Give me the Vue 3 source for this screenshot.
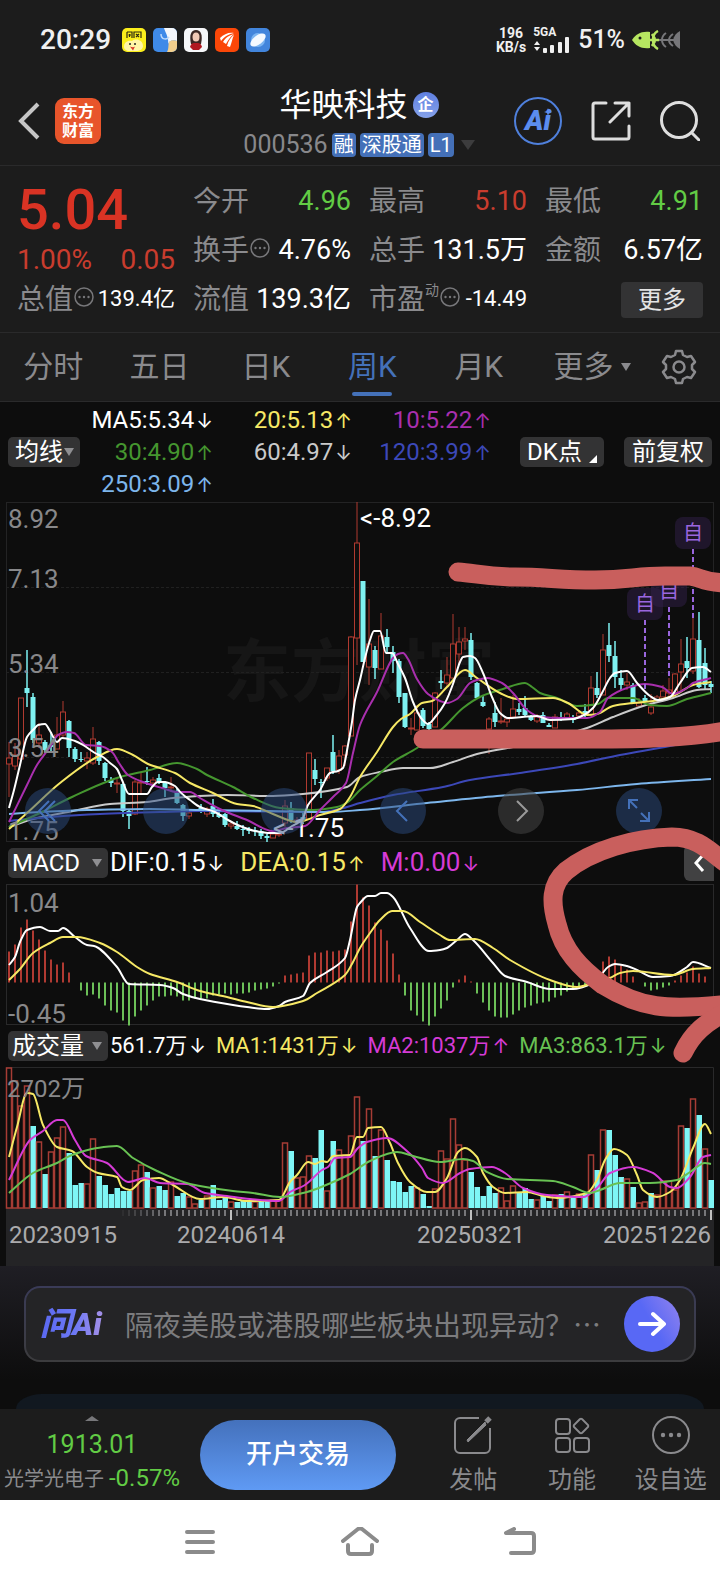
<template>
  <div class="app">
    <header class="status-bar">
      <div class="status-left">
        <span class="clock">20:29</span>
        <svg class="app-icon" viewBox="0 0 24 24" aria-hidden="true">
          <rect width="24" height="24" rx="5" fill="#fbee1c" />
          <path d="M5 4v6M5 4h5v6M7.500 6v3M6.500 7h2.500M12 10V4h7v6M14 6l3 3M17 6l-3 3" fill="none" stroke="#2c2a10" stroke-width="1.200" />
          <path d="M2 19c0-5 4-7 8-6 4-3 11-1 11 5 0 3-3 5-7 5H8c-4 0-6-2-6-4z" fill="#fff6a8" />
          <circle cx="8" cy="16" r="1" fill="#222" /><circle cx="13" cy="16" r="1" fill="#222" />
          <path d="M8 18.500c2 1 4 1 5 0l-2 4z" fill="#d8382a" />
        </svg>
        <svg class="app-icon" viewBox="0 0 24 24" aria-hidden="true">
          <rect width="24" height="24" rx="5" fill="#3f8ae8" />
          <path d="M11 0h8a5 5 0 0 1 5 5v8c-4-2-8 0-9 3 1-6-2-10-4-16z" fill="#f5f7fa" />
          <path d="M14 24c2-3 1-7 2-10 2-2 5-2 8-1v6a5 5 0 0 1-5 5z" fill="#f2cf8d" />
          <path d="M8 6c0 6 6 6 8 3" fill="none" stroke="#bcd9fb" stroke-width="1.500" />
        </svg>
        <svg class="app-icon" viewBox="0 0 24 24" aria-hidden="true">
          <rect width="24" height="24" rx="5" fill="#f6f7f9" />
          <path d="M7 16c-2-9 0-14 5-14s7 5 5 14z" fill="#3a2723" />
          <ellipse cx="12" cy="9" rx="3.500" ry="4.500" fill="#f1c9b5" />
          <path d="M6 19c1-4 3-4 6-4s5 0 6 4l-3 3H9z" fill="#b01820" />
        </svg>
        <svg class="app-icon" viewBox="0 0 24 24" aria-hidden="true">
          <rect width="24" height="24" rx="5" fill="#fb4708" />
          <path d="M5 10c4-4 9-6 14-5-5 1-9 3-13 8zM8 14c3-5 7-7 11-8-4 3-6 6-8 10zM12 18c1-5 4-9 7-11-2 4-2 7-4 12z" fill="#fff" />
        </svg>
        <svg class="app-icon" viewBox="0 0 24 24" aria-hidden="true">
          <rect width="24" height="24" rx="5" fill="#4285dc" />
          <circle cx="12" cy="12" r="7" fill="#7ab4f2" />
          <ellipse cx="12" cy="12" rx="9" ry="4.500" fill="#f4f9ff" transform="rotate(-38 12 12)" />
        </svg>
      </div>
      <div class="status-right">
        <span class="net-speed">196<br />KB/s</span>
        <span class="signal">
          <span class="signal-type">5GA</span>
          <svg width="38" height="17" viewBox="0 0 38 17" fill="#f0f0f0" aria-hidden="true">
            <path d="M1 8l3-4 3 4zM1 10l3 4 3-4z" />
            <rect x="10" y="11" width="4" height="5" rx="1" /><rect x="17" y="8" width="4" height="8" rx="1" />
            <rect x="25" y="5" width="4" height="11" rx="1" /><rect x="32" y="0" width="4" height="16" rx="1" />
          </svg>
        </span>
        <span class="battery">51%</span>
        <svg width="48" height="20" viewBox="0 0 48 20" aria-hidden="true">
          <path d="M0 10C4 4 9 1 18 2v16C9 19 4 16 0 10z" fill="#b6e661" />
          <circle cx="8" cy="8" r="1.500" fill="#1c1c1c" />
          <path d="M18 10h9M26 1c-4 2-5 5-5 9s1 7 5 9M20 4l3 5M20 16l3-5" fill="none" stroke="#b6e661" stroke-width="2.500" />
          <path d="M27 10h16M34 3c-3 2-4 4-4 7s1 5 4 7M41 4c-3 2-4 4-4 6s1 4 4 6" fill="none" stroke="#77777a" stroke-width="2" />
          <path d="M48 1c-4 2-6 5-7 9 1 4 3 7 7 9z" fill="#77777a" />
        </svg>
      </div>
    </header>

    <nav class="title-bar">
      <div class="title-left">
        <button class="plain" aria-label="返回">
          <svg width="22" height="38" viewBox="0 0 22 38" fill="none" stroke="#c6c6c6" stroke-width="4"><path d="M20 2L3 19l17 17" /></svg>
        </button>
        <a href="#" class="brand"><span>东方</span><span>财富</span></a>
      </div>
      <div class="title-center">
        <h1>华映科技<span class="corp">企</span></h1>
        <div class="code-row">
          <span class="code">000536</span>
          <span v-for="t in ['融', '深股通', 'L1']" :key="t" class="tag">{{ t }}</span>
          <svg width="14" height="10" viewBox="0 0 14 10" fill="#3c3c3d" aria-hidden="true"><path d="M0 0h14L7 10z" /></svg>
        </div>
      </div>
      <div class="title-right">
        <button class="ai-btn" aria-label="Ai">
          Ai
          <svg class="sparkle" width="8" height="8" viewBox="0 0 8 8" fill="#5b8def"><path d="M4 0l1 3 3 1-3 1-1 3-1-3-3-1 3-1z" /></svg>
        </button>
        <button class="plain" aria-label="分享">
          <svg width="40" height="40" viewBox="0 0 40 40" fill="none" stroke="#dedede" stroke-width="3" stroke-linecap="round" stroke-linejoin="round">
            <path d="M15 2H4a2 2 0 0 0-2 2v32a2 2 0 0 0 2 2h32a2 2 0 0 0 2-2V25M24 2h14v13M38 2L19 21" />
          </svg>
        </button>
        <button class="plain" aria-label="搜索">
          <svg width="40" height="40" viewBox="0 0 40 40" fill="none" stroke="#dedede" stroke-width="3" stroke-linecap="round"><circle cx="19" cy="19" r="17.500" /><path d="M32 32l7 7" /></svg>
        </button>
      </div>
    </nav>

    <section class="quote">
      <div class="price-box">
        <div class="price">5.04</div>
        <div class="change"><span>1.00%</span><span>0.05</span></div>
      </div>
      <div v-for="q in quotes" :key="q.label" class="cell">
        <span class="label">{{ q.label }}<sup v-if="q.sup">{{ q.sup }}</sup></span>
        <svg v-if="q.tip" class="tip" viewBox="0 0 20 20" fill="#77777a" aria-hidden="true">
          <circle cx="10" cy="10" r="9" fill="none" stroke="#77777a" stroke-width="1.500" />
          <circle cx="5.500" cy="10" r="1.200" /><circle cx="10" cy="10" r="1.200" /><circle cx="14.500" cy="10" r="1.200" />
        </svg>
        <span class="value" :class="[q.tone, { small: q.small }]">{{ q.value }}</span>
      </div>
      <div class="cell more-cell"><button class="more">更多</button></div>
    </section>

    <nav class="tabs">
      <button v-for="t in tabs" :key="t" class="tab" :class="{ active: t === tab }" @click="tab = t">{{ t }}</button>
      <button class="tab">更多<svg width="10" height="8" viewBox="0 0 10 8" fill="#8a8a8d"><path d="M0 0h10L5 8z" /></svg></button>
      <button class="tab gear" aria-label="设置">
        <svg width="36" height="36" viewBox="0 0 36 36" fill="none" stroke="#8a8a8d" stroke-width="2.500" stroke-linejoin="round">
          <path d="M15 2h6l1 4 4 2 4-1 4 6-3 3v4l3 3-4 6-4-1-4 2-1 4h-6l-1-4-4-2-4 1-4-6 3-3v-4l-3-3 4-6 4 1 4-2z" />
          <circle cx="18" cy="18" r="5.500" />
        </svg>
      </button>
    </nav>

    <section class="ma-panel">
      <div class="picker">
        <select aria-label="主图指标"><option>均线</option></select>
        <svg class="caret" viewBox="0 0 10 8"><path d="M0 0h10L5 8z" /></svg>
      </div>
      <div class="ma-grid">
        <span v-for="m in maValues" :key="m.text" :class="m.cls">{{ m.text }}<i class="arrow">{{ m.dir }}</i></span>
      </div>
      <div class="ma-buttons">
        <button class="chip dk">DK点<svg width="8" height="8" viewBox="0 0 8 8" fill="#fff"><path d="M8 0v8H0z" /></svg></button>
        <button class="chip">前复权</button>
      </div>
    </section>

    <section class="charts">
      <div class="stage">
        <svg class="plot" viewBox="6 502 708 340">
          <text x="223" y="696" class="watermark">东方财富</text>
          <path d="M6 587.500h708M6 672.500h708M6 757.500h708" stroke="#202020" stroke-dasharray="3 2" />
          <rect x="6.500" y="502.500" width="707" height="339" fill="none" stroke="#232324" />
          <g v-for="(c, i) in candles" :key="i" :class="c[0] ? 'up' : 'down'">
            <path :d="wick(c, i)" />
            <rect :x="cx(i) - 2.5" :y="c[2]" width="5" :height="Math.max(c[3] - c[2], 1)" />
          </g>
          <path v-for="l in priceLines" :key="l.cls" :d="curve(l.points)" class="line" :class="l.cls" />
          <text v-for="a in priceAxis" :key="a.text" x="8" :y="a.y" class="axis">{{ a.text }}</text>
          <text x="360" y="527" class="mark">&lt;-8.92</text>
          <text x="273" y="837" class="mark">&lt;-1.75</text>
          <g v-for="n in notes" :key="n.x">
            <rect :x="n.x - 18" :y="n.y - 16" width="36" height="32" rx="8" class="note-box" />
            <text :x="n.x" :y="n.y + 7" class="note-text">自</text>
            <path :d="`M${n.x} ${n.y + 16}V${n.end}`" stroke="#9a66de" stroke-width="2" stroke-dasharray="5 3" />
          </g>
        </svg>
        <div class="pan-row">
          <button v-for="p in pans" :key="p.name" class="pan" :class="{ grey: p.grey }" :aria-label="p.name">
            <svg viewBox="0 0 46 46" fill="none" stroke-width="2"><path :d="p.d" /></svg>
          </button>
        </div>
      </div>

      <div class="ind-head">
        <div class="picker wide">
          <select aria-label="副图指标"><option>MACD</option></select>
          <svg class="caret" viewBox="0 0 10 8"><path d="M0 0h10L5 8z" /></svg>
        </div>
        <div class="ind-values">
          <span>DIF:0.15<i class="arrow">↓</i></span>
          <span class="yellow">DEA:0.15<i class="arrow">↑</i></span>
          <span class="magenta">M:0.00<i class="arrow">↓</i></span>
        </div>
        <button class="collapse" aria-label="收起">
          <svg width="12" height="20" viewBox="0 0 12 20" fill="none" stroke="#fff" stroke-width="3"><path d="M10 2L3 10l7 8" /></svg>
        </button>
      </div>
      <svg class="plot" viewBox="6 884 708 141">
        <rect x="6.500" y="884.500" width="707" height="140" fill="none" stroke="#29292a" />
        <rect
          v-for="(h, i) in macd" :key="i" :x="cx(i) - 1" width="2"
          :y="h > 0 ? 982.5 - h : 982.5" :height="Math.abs(h)" :fill="h > 0 ? '#b03a32' : '#6cc058'"
        />
        <path :d="curve(dif)" class="line white" />
        <path :d="curve(dea)" class="line yellow" />
        <text x="8" y="912" class="axis">1.04</text>
        <text x="8" y="1023" class="axis">-0.45</text>
      </svg>

      <div class="ind-head">
        <div class="picker wide">
          <select aria-label="量能指标"><option>成交量</option></select>
          <svg class="caret" viewBox="0 0 10 8"><path d="M0 0h10L5 8z" /></svg>
        </div>
        <div class="ind-values vol">
          <span>561.7万<i class="arrow">↓</i></span>
          <span class="yellow">MA1:1431万<i class="arrow">↓</i></span>
          <span class="magenta">MA2:1037万<i class="arrow">↑</i></span>
          <span class="lime">MA3:863.1万<i class="arrow">↓</i></span>
        </div>
      </div>
      <svg class="plot" viewBox="6 1067 708 141">
        <path d="M6 1067.500h707.500V1208" fill="none" stroke="#29292a" />
        <rect
          v-for="(v, i) in volumes" :key="i" :class="v > 0 ? 'vol-up' : 'vol-down'"
          :x="cx(i) - 2.5" :y="1208 - Math.abs(v)" :width="v > 0 ? 5 : 5.5" :height="Math.abs(v)"
        />
        <path v-for="l in volLines" :key="l.cls" :d="curve(l.points)" class="line" :class="l.cls" />
        <text x="7" y="1097" class="axis unit">2702万</text>
      </svg>
      <svg class="plot time-axis" viewBox="6 1208 708 58">
        <path v-for="i in 99" :key="i" :d="`M${cx(i + 18)} 1210v6`" stroke="#77777a" stroke-width="2" :opacity="Math.min(i / 8, 1)" />
        <path d="M231 1210v10M471 1210v10M711 1210v10" stroke="#c0c0c0" stroke-width="2" />
        <text x="9" y="1243">20230915</text>
        <text x="231" y="1243" text-anchor="middle">20240614</text>
        <text x="471" y="1243" text-anchor="middle">20250321</text>
        <text x="711" y="1243" text-anchor="end">20251226</text>
      </svg>

      <!-- hand-drawn marks -->
      <svg class="ink" viewBox="0 502 720 764">
        <path d="M458 572C475 573 485 577 515 577S560 580 595 580S635 576 665 576H690C702 577 702 583 730 583" />
        <path d="M423 739H590C640 739 690 738 730 730" />
        <path d="M730 866C712 854 700 837 672 837C634 838 592 850 566 871C550 885 551 903 557 924C563 950 580 968 603 985C640 1008 665 1011 730 1004" />
        <path d="M683 1053C692 1034 705 1022 730 1010" />
      </svg>
    </section>

    <section class="ask">
      <form class="ask-box" @submit.prevent>
        <span class="ask-logo">问<em>Ai</em></span>
        <input v-model="question" type="text" aria-label="问Ai" placeholder="隔夜美股或港股哪些板块出现异动？…" />
        <button type="submit" class="send" aria-label="发送">
          <svg width="28" height="26" viewBox="0 0 28 26" fill="none" stroke="#fff" stroke-width="4" stroke-linecap="round" stroke-linejoin="round"><path d="M2 13h23M15 3l11 10-11 10" /></svg>
        </button>
      </form>
      <div class="next-card"></div>
    </section>

    <footer class="bottom-bar">
      <a href="#" class="index">
        <svg width="14" height="5" viewBox="0 0 14 5" fill="#77777a" aria-hidden="true"><path d="M7 0l7 5H0z" /></svg>
        <span class="index-value">1913.01</span>
        <span class="index-name">光学光电子 <b>-0.57%</b></span>
      </a>
      <button class="trade">开户交易</button>
      <div class="actions">
        <button class="action">
          <svg viewBox="0 0 38 38"><path d="M25 2H6a5 5 0 0 0-5 5v25a5 5 0 0 0 5 5h25a5 5 0 0 0 5-5V12" /><path d="M36 2l-4 4" stroke-width="5" /><path d="M31 6L13 24l1 2 18-17z" fill="#8a8a8d" stroke-width="1" /></svg>
          发帖
        </button>
        <button class="action">
          <svg viewBox="0 0 38 38"><rect x="3" y="3" width="14" height="15" rx="3" /><rect x="3" y="22" width="14" height="14" rx="3" /><rect x="21" y="22" width="15" height="14" rx="3" /><path d="M27 3l-6 6a2 2 0 0 0 0 2l6 6a2 2 0 0 0 2 0l6-6a2 2 0 0 0 0-2l-6-6a2 2 0 0 0-2 0z" /></svg>
          功能
        </button>
        <button class="action">
          <svg viewBox="0 0 38 38"><circle cx="19" cy="19" r="18" /><g fill="#8a8a8d" stroke="none"><circle cx="11" cy="19" r="2.200" /><circle cx="19" cy="19" r="2.200" /><circle cx="27" cy="19" r="2.200" /></g></svg>
          设自选
        </button>
      </div>
    </footer>

    <nav class="system-nav">
      <button class="plain" aria-label="最近任务"><svg width="38" height="30" viewBox="0 0 38 30"><path d="M6 5h26M6 15h26M6 25h26" /></svg></button>
      <button class="plain" aria-label="主屏幕"><svg width="38" height="30" viewBox="0 0 38 30"><path d="M2 14L17 2q2-1 4 0l15 12M7 18v6q0 3 3 3h18q3 0 3-3v-6" /></svg></button>
      <button class="plain" aria-label="返回上一级"><svg width="38" height="30" viewBox="0 0 38 30"><path d="M13 2L5 6h25q3 0 3 3v14q0 3-3 3H10" /></svg></button>
    </nav>
  </div>
</template>

<script setup>
import { ref } from 'vue'

const tabs = ['分时', '五日', '日K', '周K', '月K']
const tab = ref('周K')
const question = ref('')

const quotes = [
  { label: '今开', value: '4.96', tone: 'fall' },
  { label: '最高', value: '5.10', tone: 'rise' },
  { label: '最低', value: '4.91', tone: 'fall' },
  { label: '换手', value: '4.76%', tip: true },
  { label: '总手', value: '131.5万' },
  { label: '金额', value: '6.57亿' },
  { label: '总值', value: '139.4亿', tip: true, small: true },
  { label: '流值', value: '139.3亿' },
  { label: '市盈', sup: '动', value: '-14.49', tip: true, small: true },
]

const maValues = [
  { text: 'MA5:5.34', dir: '↓', cls: 'white' },
  { text: '20:5.13', dir: '↑', cls: 'yellow' },
  { text: '10:5.22', dir: '↑', cls: 'purple' },
  { text: '30:4.90', dir: '↑', cls: 'green' },
  { text: '60:4.97', dir: '↓', cls: 'silver' },
  { text: '120:3.99', dir: '↑', cls: 'indigo' },
  { text: '250:3.09', dir: '↑', cls: 'sky' },
]

const priceAxis = [
  { text: '8.92', y: 528 },
  { text: '7.13', y: 588 },
  { text: '5.34', y: 673 },
  { text: '3.54', y: 757 },
  { text: '1.75', y: 840 },
]

const notes = [
  { x: 645, y: 604, end: 692 },
  { x: 669, y: 591, end: 678 },
  { x: 693, y: 533, end: 620 },
]

const pans = [
  { name: '最早', d: 'M24 13L14 23l10 10M30 13L20 23l10 10' },
  { name: '缩小', d: '' },
  { name: '放大', d: '' },
  { name: '前移', d: 'M27 13L17 23l10 10' },
  { name: '后移', d: 'M19 13l10 10-10 10', grey: true },
  { name: '全屏', d: 'M13 21v-9h9M13 12l8 8M33 24v9h-9M33 33l-8-8' },
]

const cx = (i) => 9 + i * 6
const wick = (c, i) => `M${cx(i)} ${c[1]}V${c[2]}M${cx(i)} ${c[3]}V${c[4]}`

// smooth path through "x,y x,y ..." points, control points never leave the segment's x range
const curve = (points) => {
  const p = points.split(' ').map((s) => s.split(',').map(Number))
  const slope = (i) => {
    if (i === 0 || i === p.length - 1) return 0
    const a = (p[i][1] - p[i - 1][1]) / (p[i][0] - p[i - 1][0])
    const b = (p[i + 1][1] - p[i][1]) / (p[i + 1][0] - p[i][0])
    return a * b <= 0 ? 0 : (2 * a * b) / (a + b)
  }
  let d = `M${p[0]}`
  for (let i = 1; i < p.length; i++) {
    const [x0, y0] = p[i - 1]
    const [x1, y1] = p[i]
    const h = (x1 - x0) / 3
    const s0 = i === 1 ? (y1 - y0) / (x1 - x0) : slope(i - 1)
    const s1 = i === p.length - 1 ? (y1 - y0) / (x1 - x0) : slope(i)
    d += `C${x0 + h},${y0 + s0 * h} ${x1 - h},${y1 - s1 * h} ${x1},${y1}`
  }
  return d
}

// [up, high, body top, body bottom, low]
const candles = [
  [1, 742, 758, 764, 797], [1, 743, 755, 766, 770], [1, 698, 698, 759, 759], [0, 650, 688, 693, 707],
  [0, 693, 697, 740, 743], [1, 723, 735, 743, 748], [0, 740, 742, 750, 753], [0, 732, 745, 747, 752],
  [1, 717, 735, 749, 749], [1, 701, 712, 735, 738], [0, 720, 721, 748, 757], [0, 747, 749, 759, 762],
  [0, 752, 759, 760, 762], [1, 752, 758, 761, 769], [1, 727, 739, 763, 765], [0, 741, 742, 761, 765],
  [0, 762, 763, 778, 781], [0, 777, 780, 783, 787], [1, 779, 783, 784, 793], [0, 783, 784, 811, 817],
  [0, 809, 811, 816, 829], [1, 780, 782, 814, 815], [1, 773, 782, 783, 794], [0, 767, 781, 782, 785],
  [1, 777, 780, 783, 786], [0, 774, 778, 782, 784], [0, 781, 782, 788, 797], [1, 777, 787, 788, 792],
  [0, 788, 791, 803, 804], [0, 804, 805, 816, 821], [1, 810, 813, 816, 819], [0, 809, 810, 811, 812],
  [0, 804, 808, 810, 813], [1, 807, 809, 814, 817], [0, 799, 806, 814, 817], [0, 812, 814, 817, 818],
  [0, 813, 814, 825, 827], [1, 822, 824, 826, 829], [0, 821, 826, 829, 830], [0, 825, 829, 830, 836],
  [0, 827, 829, 831, 834], [0, 827, 830, 831, 836], [0, 829, 831, 836, 839], [0, 834, 836, 838, 842],
  [1, 833, 834, 838, 838], [1, 833, 834, 835, 837], [1, 800, 806, 823, 827], [0, 802, 808, 820, 823],
  [1, 817, 820, 822, 825], [0, 812, 817, 820, 824], [1, 753, 753, 819, 819], [0, 759, 770, 779, 785],
  [0, 779, 782, 783, 798], [1, 768, 768, 778, 781], [0, 735, 752, 771, 774], [1, 750, 756, 770, 774],
  [1, 745, 746, 755, 766], [1, 636, 637, 736, 736], [1, 502, 543, 638, 665], [0, 581, 581, 662, 662],
  [1, 599, 644, 667, 685], [0, 646, 650, 668, 679], [1, 613, 636, 669, 669], [0, 629, 637, 647, 652],
  [0, 646, 652, 661, 673], [0, 659, 661, 697, 703], [0, 693, 693, 727, 728], [1, 718, 728, 729, 735],
  [1, 705, 713, 730, 730], [0, 708, 710, 726, 728], [0, 722, 724, 729, 730], [1, 692, 693, 727, 727],
  [0, 670, 681, 683, 689], [1, 657, 675, 683, 687], [1, 614, 644, 678, 678], [1, 627, 642, 654, 664],
  [1, 627, 639, 641, 650], [0, 633, 640, 677, 680], [0, 682, 683, 698, 698], [0, 696, 702, 706, 707],
  [1, 717, 719, 729, 754], [0, 702, 713, 722, 727], [1, 698, 721, 722, 724], [1, 717, 719, 722, 727],
  [1, 695, 709, 717, 717], [0, 703, 709, 712, 715], [0, 696, 708, 715, 717], [0, 715, 716, 720, 721],
  [1, 714, 717, 721, 723], [0, 712, 715, 723, 723], [0, 723, 725, 727, 727], [1, 714, 717, 728, 728],
  [0, 712, 717, 720, 721], [1, 712, 714, 718, 720], [0, 715, 717, 720, 723], [1, 710, 713, 716, 717],
  [0, 704, 711, 713, 717], [1, 676, 688, 715, 715], [0, 672, 688, 695, 698], [1, 634, 650, 695, 695],
  [0, 623, 645, 656, 662], [0, 641, 656, 677, 688], [0, 670, 678, 685, 690], [1, 673, 682, 685, 690],
  [0, 683, 685, 703, 704], [1, 698, 703, 706, 708], [0, 695, 698, 701, 702], [1, 694, 707, 713, 715],
  [1, 695, 697, 700, 702], [1, 685, 691, 697, 697], [1, 678, 690, 693, 697], [1, 673, 674, 693, 697],
  [1, 639, 664, 672, 690], [0, 637, 661, 668, 678], [1, 618, 639, 671, 674], [0, 612, 640, 687, 688],
  [0, 648, 663, 685, 690], [0, 681, 684, 687, 693],
]

const priceLines = [
  { cls: 'silver', points: '9,827 33,819 73,811 110,804 147,802 173,798 227,795 273,796 303,794 347,787 360,777 380,772 403,768 430,768 453,762 477,754 513,747 550,739 587,728 613,717 643,706 673,698 697,690 711,689' },
  { cls: 'indigo', points: '9,821 50,817 100,814 160,812 200,811 320,812 343,808 360,803 393,795 443,787 470,780 520,773 577,764 620,755 670,746 711,737' },
  { cls: 'sky', points: '9,814 40,812 87,810 150,809 200,810 270,811 330,812 360,810 427,803 497,796 577,790 637,784 711,779' },
  { cls: 'green', points: '9,827 40,813 72,797 117,778 150,770 177,763 197,769 207,775 233,787 253,798 280,808 313,810 337,807 348,802 360,790 377,776 393,762 417,748 443,728 463,708 482,696 503,689 525,683 532,687 540,693 557,698 577,706 598,704 608,698 633,698 650,705 667,706 687,699 711,693' },
  { cls: 'yellow', points: '9,829 27,813 60,783 97,757 117,749 133,755 148,764 175,773 190,783 213,793 237,804 253,806 273,814 297,822 320,815 340,809 350,797 360,777 377,752 393,727 401,719 410,714 422,703 432,701 447,687 465,670 477,678 500,693 517,699 553,698 568,703 587,715 597,714 613,706 633,703 653,701 673,696 693,685 711,682' },
  { cls: 'purple', points: '9,822 27,785 37,765 50,747 58,735 67,732 74,733 86,745 100,746 112,752 119,763 128,775 143,782 162,788 177,792 190,792 200,798 222,810 247,820 273,831 287,828 305,826 320,810 333,797 346,783 353,753 360,725 377,692 393,658 398,654 403,653 408,659 417,679 428,694 440,701 447,703 457,699 470,683 477,680 487,678 502,683 513,693 527,710 540,717 560,718 587,718 600,712 608,698 627,688 645,684 662,687 673,694 687,688 693,683 711,678' },
  { cls: 'white', points: '9,808 14,790 20,765 27,737 34,729 38,725 45,724 50,731 57,742 62,738 75,741 83,745 95,753 103,757 110,763 117,769 122,780 129,794 147,794 152,787 158,782 164,782 175,786 181,793 190,800 200,807 215,812 228,820 240,826 255,831 270,833 280,833 292,826 302,820 308,805 320,790 330,773 338,771 343,768 348,745 352,722 355,700 360,680 365,658 370,640 374,631 380,631 386,653 392,653 398,664 405,678 413,702 421,718 428,724 436,716 445,703 453,684 460,662 463,657 470,656 475,658 483,673 492,697 500,713 508,718 522,717 537,716 550,720 573,719 584,715 593,708 602,693 610,678 615,673 627,671 637,683 650,696 658,700 670,697 680,683 692,668 703,667 711,672' },
]

// histogram heights in px, negative below zero
const macd = [
  31, 38, 55, 63, 52, 43, 32, 23, 18, 20, 10, 0, -8, -13, -12, -16, -23, -28, -30, -38,
  -43, -34, -28, -23, -18, -14, -14, -13, -14, -18, -18, -16, -16, -16, -13, -12, -11, -12, -11, -11,
  -10, -8, -7, -6, -4, -1, 7, 8, 9, 10, 27, 30, 30, 32, 31, 32, 33, 61, 98, 85,
  77, 60, 53, 42, 29, 8, -13, -28, -33, -39, -43, -34, -26, -18, -5, 3, 7, 1, -11, -20,
  -28, -34, -35, -35, -32, -28, -25, -23, -21, -20, -19, -15, -13, -9, -7, -4, -3, 2, 10, 21,
  26, 23, 17, 13, 6, 0, -4, -8, -7, -5, -3, 2, 7, 10, 16, 9, 6, 0,
]
const dif = '9,965 15,957 20,942 27,930 40,927 50,931 58,931 63,928 75,937 87,945 94,946 117,967 129,984 160,985 173,988 183,994 200,999 233,1005 247,1007 267,1009 279,1006 285,1002 303,996 310,983 327,972 345,958 350,940 357,907 360,903 368,896 375,896 381,893 387,893 393,897 410,928 429,951 440,950 447,948 457,940 465,934 473,940 493,963 505,976 527,982 550,989 573,989 583,987 593,983 601,975 608,967 615,964 627,966 637,970 653,977 670,976 687,967 693,962 711,968'
const dea = '9,980 20,969 33,953 50,943 63,937 77,937 100,943 117,952 137,967 150,974 177,982 200,991 227,997 247,1002 273,1007 303,1001 317,993 345,975 353,962 360,948 370,933 380,920 392,911 403,911 420,922 440,935 450,940 475,939 493,948 510,960 550,980 577,987 593,983 610,978 620,973 633,971 673,975 693,969 711,968'

// positive: up week, negative: down week
const volumes = [
  140, 127, 102, 122, -82, 66, -34, 56, 70, 81, -55, -23, -25, 24, 69, -32, -23, -14, -20, -17,
  -17, 37, 43, -36, 20, -22, -18, 26, -12, -15, 11, 4, -8, 12, -23, -8, -10, 6, -6, -8,
  -6, 6, -7, -7, 8, 8, 65, -57, 30, 31, 52, -50, -78, 17, -67, 58, 53, 72, 111, -67,
  99, -52, 78, -48, -27, -26, -16, -22, 20, -14, -2, 19, 57, 49, 89, 63, 48, -36, -21, -12,
  -22, -15, 20, 7, 22, -15, -20, -9, 8, -12, -7, 13, -14, 16, -12, 14, -14, 53, -38, 78,
  -78, -53, -31, 29, -21, 5, 6, -15, 13, 27, 27, 18, 82, -80, 109, -93, 59, -28,
]
const volLines = [
  { cls: 'yellow', points: '9,1157 17,1127 27,1093 33,1094 43,1125 57,1147 72,1151 87,1167 98,1173 117,1177 122,1187 130,1190 143,1180 159,1178 173,1185 200,1199 223,1197 247,1201 279,1200 290,1182 297,1175 308,1162 315,1164 322,1161 327,1162 333,1156 350,1155 357,1137 363,1137 368,1128 381,1127 390,1143 398,1163 410,1182 427,1192 435,1192 447,1178 458,1152 465,1148 477,1157 483,1173 493,1187 505,1193 527,1192 543,1196 557,1198 587,1193 597,1180 605,1160 614,1149 627,1155 637,1175 643,1190 657,1197 670,1192 680,1180 693,1148 705,1124 711,1134' },
  { cls: 'magenta', points: '9,1180 30,1140 43,1131 57,1120 63,1120 75,1140 86,1156 107,1163 128,1182 145,1178 160,1183 187,1184 205,1193 227,1196 250,1199 279,1201 290,1192 305,1185 322,1170 328,1167 335,1158 350,1157 358,1148 367,1142 387,1138 408,1152 422,1168 428,1178 443,1183 460,1173 470,1169 492,1167 505,1173 523,1188 547,1195 583,1197 597,1188 610,1173 633,1167 653,1173 670,1187 677,1188 690,1177 703,1157 711,1155' },
  { cls: 'lime', points: '9,1193 33,1173 57,1163 72,1155 97,1148 117,1146 133,1158 157,1171 190,1184 233,1191 253,1193 280,1197 307,1192 333,1182 350,1174 370,1161 397,1152 413,1156 440,1162 463,1159 473,1161 487,1172 507,1179 553,1181 573,1187 590,1193 600,1190 620,1183 650,1183 677,1180 690,1172 705,1163 711,1164' },
]
</script>

<style>
html, body { background: #0d0d0d; }
</style>

<style scoped>
.app {
  font-family: Roboto, "Noto Sans CJK SC", sans-serif;
  line-height: 1.2;
  color: #fff;
  background: #0d0d0d;
  overflow: hidden;
  white-space: nowrap;
}
.app *, .app { box-sizing: border-box; }
button, select, input { font: inherit; color: inherit; margin: 0; padding: 0; border: none; background: none; outline: none; }
button { cursor: pointer; }
a { color: inherit; text-decoration: none; }
svg { display: block; flex-shrink: 0; }
.plain { display: flex; align-items: center; }

.white { color: #fff; stroke: #fff; }
.yellow { color: #f6e865; stroke: #f6e865; }
.purple { color: #a92fae; stroke: #a92fae; }
.magenta { color: #d63bd6; stroke: #d63bd6; }
.green { color: #45962f; stroke: #45962f; }
.lime { color: #68c253; stroke: #68c253; }
.silver { color: #cacaca; stroke: #cacaca; }
.indigo { color: #3c48b8; stroke: #3c48b8; }
.sky { color: #7db6ec; stroke: #7db6ec; }
.arrow { font-family: Inter, sans-serif; font-style: normal; font-size: 20px; margin-left: 2px; }

/* status bar */
.status-bar {
  display: flex;
  align-items: center;
  justify-content: space-between;
  height: 80px;
  padding: 0 40px;
  background: #1c1c1c;
  color: #f0f0f0;
}
.status-left { display: flex; align-items: center; gap: 7px; }
.clock { font-size: 28px; font-weight: 500; margin-right: 4px; }
.app-icon { width: 24px; height: 24px; }
.status-right { display: flex; align-items: center; gap: 7px; }
.net-speed { font-size: 14px; line-height: 14px; font-weight: 700; text-align: center; }
.signal { display: flex; flex-direction: column; }
.signal-type { font-size: 12px; line-height: 10px; font-weight: 700; }
.battery { font-size: 25px; font-weight: 500; }

/* title bar */
.title-bar {
  display: grid;
  grid-template-columns: 1fr auto 1fr;
  align-items: center;
  height: 86px;
  padding: 0 20px 0 18px;
  background: #1c1c1c;
  border-bottom: 1px solid #2a2a2b;
}
.title-left { display: flex; align-items: center; gap: 15px; margin-bottom: 4px; }
.brand {
  display: flex;
  flex-direction: column;
  align-items: center;
  justify-content: center;
  width: 46px;
  height: 46px;
  border-radius: 9px;
  background: #e8552b;
  font-size: 16px;
  line-height: 19px;
  font-weight: 700;
}
h1 {
  display: flex;
  align-items: center;
  justify-content: center;
  gap: 5px;
  margin: 0;
  font-size: 32px;
  line-height: 44px;
  font-weight: 400;
}
.corp {
  width: 26px;
  height: 26px;
  border-radius: 50%;
  background: linear-gradient(#5f7fe0, #86a2ea);
  font-size: 16px;
  line-height: 25px;
  font-weight: 700;
  text-align: center;
}
.code-row { display: flex; align-items: center; gap: 4px; height: 36px; }
.code { font-size: 25px; color: #88888b; }
.tag {
  height: 24px;
  padding: 0 2px;
  border-radius: 4px;
  background: #4470b8;
  font-size: 20px;
  line-height: 24px;
}
.code-row svg { margin-left: 3px; }
.title-right { display: flex; align-items: center; justify-content: flex-end; gap: 29px; margin-bottom: 4px; }
.ai-btn {
  position: relative;
  width: 48px;
  height: 48px;
  border: 2px solid #4f80dc;
  border-radius: 50%;
  color: #5b8def;
  font-size: 28px;
  font-weight: 900;
  font-style: italic;
}
.sparkle { position: absolute; top: 9px; right: 8px; }

/* quote */
.quote {
  display: grid;
  grid-template-columns: repeat(4, 1fr);
  grid-auto-rows: 49px;
  column-gap: 18px;
  padding: 11px 17px 8px;
  background: #1c1c1c;
  border-bottom: 1px solid #2a2a2b;
}
.price-box { grid-row: span 2; }
.price { font-size: 56px; line-height: 66px; font-weight: 500; color: #d93324; }
.change { display: flex; justify-content: space-between; font-size: 28px; line-height: 34px; color: #c93c2e; }
.cell { display: flex; align-items: center; min-width: 0; }
.label { font-size: 28px; color: #8a8a8d; }
.label sup { font-size: 14px; line-height: 14px; vertical-align: 14px; }
.tip { width: 20px; height: 20px; margin: 0 1px; align-self: flex-start; margin-top: 12px; }
.value { margin-left: auto; font-size: 27px; }
.value.small { font-size: 22px; }
.rise { color: #c93c2e; }
.fall { color: #62cc45; }
.more-cell { justify-content: flex-end; }
.more { width: 82px; height: 36px; border-radius: 4px; background: #333334; color: #e4e4e4; font-size: 24px; line-height: 36px; }

/* period tabs */
.tabs {
  display: grid;
  grid-template-columns: repeat(5, 1fr) 120px 68px;
  height: 69px;
  background: #1c1c1c;
  border-bottom: 1px solid #2a2a2b;
}
.tab {
  position: relative;
  display: flex;
  align-items: center;
  justify-content: center;
  gap: 7px;
  font-size: 30px;
  color: #8a8a8d;
}
.tab.active { color: #4471b9; }
.tab.active::after {
  content: "";
  position: absolute;
  left: 50%;
  bottom: 5px;
  width: 40px;
  height: 4px;
  margin-left: -20px;
  border-radius: 2px;
  background: #4471b9;
}
.gear { justify-content: flex-start; padding-left: 9px; }

/* MA values */
.ma-panel {
  display: flex;
  align-items: center;
  height: 100px;
  padding: 0 8px;
}
.picker { position: relative; width: 72px; flex-shrink: 0; }
.picker.wide { width: 100px; }
.picker select {
  display: block;
  appearance: none;
  width: 100%;
  height: 30px;
  padding-left: 7px;
  border-radius: 5px;
  background: #333334;
  font-size: 24px;
  line-height: 30px;
}
.picker.wide select { padding-left: 4px; }
.caret { position: absolute; right: 6px; top: 11px; width: 10px; height: 8px; fill: #8f8f92; pointer-events: none; }
.ma-grid {
  display: grid;
  grid-template-columns: 133px 139px 139px;
  grid-auto-rows: 32px;
  font-size: 24px;
  line-height: 32px;
  text-align: right;
}
.ma-buttons { display: flex; gap: 20px; margin-left: auto; }
.chip {
  display: flex;
  align-items: center;
  justify-content: center;
  height: 30px;
  width: 88px;
  border-radius: 5px;
  background: #333334;
  font-size: 24px;
  line-height: 30px;
}
.chip.dk { width: 84px; gap: 7px; }
.chip.dk svg { align-self: flex-end; margin-bottom: 4px; }

/* charts */
.charts { position: relative; padding: 0 6px; }
.stage { position: relative; }
.plot { width: 100%; height: auto; overflow: visible; }
.line { fill: none; stroke-width: 2; stroke-linejoin: round; }
.up path { stroke: #b03a30; }
.up rect { fill: #0d0d0d; stroke: #b03a30; }
.down path { stroke: #7ef1f1; stroke-width: 1.5; }
.down rect { fill: #7ef1f1; }
.vol-up { fill: #0d0d0d; stroke: #a63c35; stroke-width: 1.5; }
.vol-down { fill: #7ef6f6; }
.axis { fill: #88888a; font-size: 26px; }
.axis.unit { font-size: 24px; }
.mark { fill: #fff; font-size: 26px; }
.watermark { fill: #161616; font-size: 68px; font-weight: 700; }
.note-box { fill: #32204a; opacity: 0.5; }
.note-text { fill: #9a66de; font-size: 20px; text-anchor: middle; }
.pan-row {
  position: absolute;
  left: 19px;
  right: 52px;
  bottom: 8px;
  display: flex;
  justify-content: space-between;
}
.pan { width: 46px; height: 46px; border-radius: 50%; background: rgba(44, 76, 128, 0.5); }
.pan svg { stroke: #4471b9; }
.pan.grey { background: rgba(70, 70, 70, 0.55); }
.pan.grey svg { stroke: #9a9a9a; }
.ind-head { display: flex; align-items: center; height: 42px; padding-left: 2px; }
.ind-values { display: flex; gap: 16px; margin-left: 2px; font-size: 26px; }
.ind-values.vol { gap: 10px; font-size: 22px; }
.collapse {
  display: flex;
  align-items: center;
  justify-content: center;
  width: 30px;
  height: 36px;
  margin-left: auto;
  border-radius: 6px 0 0 6px;
  background: #414142;
}
.time-axis { background: #242426; }
.time-axis text { fill: #ababad; font-size: 24px; }
.ink { position: absolute; left: 0; top: 0; width: 100%; height: auto; pointer-events: none; }
.ink path { fill: none; stroke: #c95f5d; stroke-width: 19; stroke-linecap: round; stroke-linejoin: round; }

/* ask */
.ask { padding: 20px 24px 0; background: linear-gradient(#1f1e24, #0d0d0d 80%); }
.ask-box {
  display: flex;
  align-items: center;
  height: 76px;
  padding: 0 14px;
  border: 2px solid transparent;
  border-radius: 16px;
  background: linear-gradient(#242426, #242426) padding-box, linear-gradient(#3a3b58, #3c3c3e) border-box;
}
.ask-logo {
  width: 85px;
  font-size: 32px;
  font-weight: 900;
  font-style: italic;
  background: linear-gradient(90deg, #5a68f0, #6c78f5 40%, #a691e6 75%);
  background-clip: text;
  color: transparent;
}
.ask-box input {
  flex: 1;
  min-width: 0;
  height: 44px;
  font-family: "Noto Sans CJK SC", sans-serif;
  font-size: 28px;
}
.ask-box input::placeholder { color: #7c7c7e; opacity: 1; }
.send {
  display: flex;
  align-items: center;
  justify-content: center;
  width: 56px;
  height: 56px;
  border-radius: 50%;
  background: linear-gradient(60deg, #5868f5 50%, #9384ee);
}
.next-card { height: 15px; margin: 32px -8px 0; border-radius: 26px 26px 0 0 / 15px 15px 0 0; background: #111820; }

/* bottom */
.bottom-bar { display: flex; align-items: center; height: 91px; background: #1c1c1c; }
.index {
  display: flex;
  flex-direction: column;
  align-items: center;
  width: 188px;
  padding-right: 4px;
}
.index-value { font-size: 25px; line-height: 38px; margin-top: 5px; color: #62cc45; }
.index-name { font-size: 20px; line-height: 28px; color: #8a8a8d; }
.index-name b { font-size: 24px; font-weight: 400; color: #62cc45; }
.trade {
  width: 196px;
  height: 70px;
  margin-left: 12px;
  border-radius: 35px;
  background: linear-gradient(#4471bc, #5f9af4);
  font-size: 26px;
  font-weight: 500;
}
.actions { display: flex; flex: 1; margin-left: 28px; }
.action {
  display: flex;
  flex: 1;
  flex-direction: column;
  align-items: center;
  gap: 10px;
  padding-top: 2px;
  font-size: 24px;
  line-height: 32px;
  color: #8a8a8d;
}
.action svg { width: 38px; height: 38px; fill: none; stroke: #8a8a8d; stroke-width: 2; }
.system-nav {
  display: flex;
  height: 84px;
  padding: 0 16.66%;
  background: #fff;
}
.system-nav button { flex: 1; justify-content: center; }
.system-nav svg { fill: none; stroke: #8b8b8b; stroke-width: 4; stroke-linecap: round; stroke-linejoin: round; }
</style>
